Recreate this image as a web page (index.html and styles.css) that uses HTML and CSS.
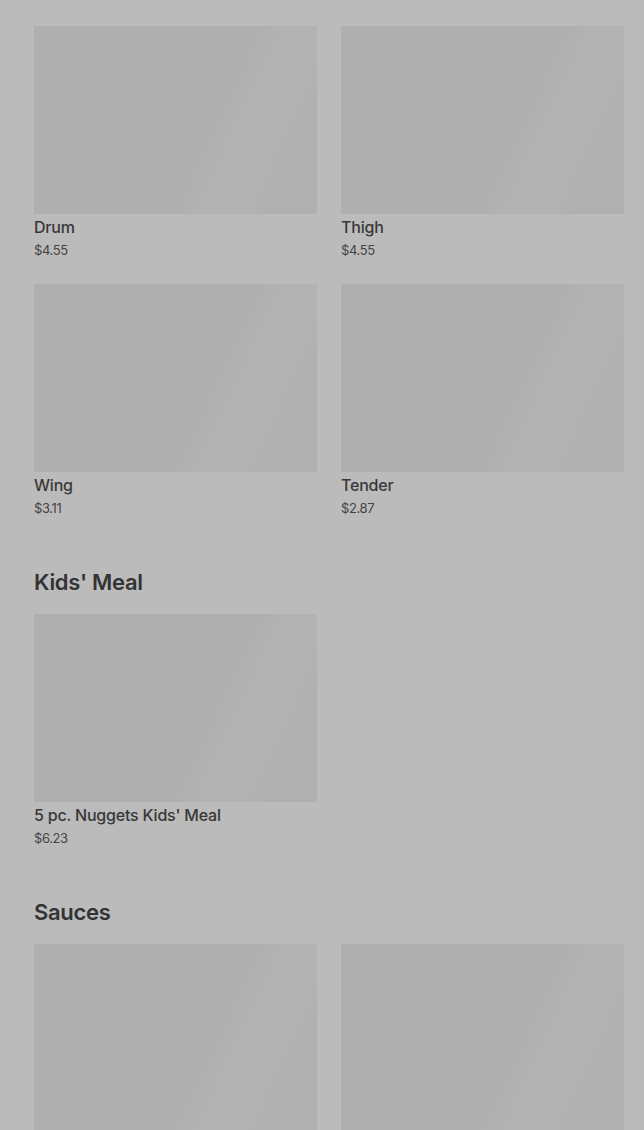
FILE: index.html
```html
<!DOCTYPE html>
<html lang="en">
<head>
<meta charset="utf-8">
<title>Menu</title>
<link rel="stylesheet" href="styles.css">
</head>
<body>
<main class="menu">
  <section class="section">
    <div class="grid">
      <div class="item"><div class="thumb"></div><div class="name">Drum</div><div class="price">$4.55</div></div>
      <div class="item"><div class="thumb"></div><div class="name">Thigh</div><div class="price">$4.55</div></div>
      <div class="item"><div class="thumb"></div><div class="name">Wing</div><div class="price">$3.11</div></div>
      <div class="item"><div class="thumb"></div><div class="name">Tender</div><div class="price">$2.87</div></div>
    </div>
  </section>
  <section class="section">
    <h2 class="heading">Kids' Meal</h2>
    <div class="grid">
      <div class="item"><div class="thumb"></div><div class="name">5 pc. Nuggets Kids' Meal</div><div class="price">$6.23</div></div>
    </div>
  </section>
  <section class="section">
    <h2 class="heading">Sauces</h2>
    <div class="grid">
      <div class="item"><div class="thumb"></div><div class="name"></div><div class="price"></div></div>
      <div class="item"><div class="thumb"></div><div class="name"></div><div class="price"></div></div>
    </div>
  </section>
</main>
</body>
</html>
```
FILE: styles.css
```css
html, body {
  margin: 0;
  padding: 0;
  background: #bbbbbb;
  overflow: hidden;
}
body {
  font-family: Inter, "Noto Sans", "Liberation Sans", sans-serif;
  color: #353535;
}
.menu {
  padding: 26px 20px 0 34px;
  display: flex;
  flex-direction: column;
  gap: 50px;
}
.heading {
  margin: 0 0 18px;
  font-size: 22px;
  line-height: 28px;
  font-weight: 600;
  letter-spacing: -0.3px;
  color: #333333;
}
.grid {
  display: grid;
  grid-template-columns: 283px 283px;
  column-gap: 24px;
  row-gap: 24px;
}
.thumb {
  height: 188px;
  background: linear-gradient(115deg, #afafaf 0%, #afafaf 60%, #b3b3b3 70%, #b3b3b3 78%, #b0b0b0 86%, #b0b0b0 100%);
}
.name {
  margin-top: 3px;
  font-size: 16px;
  line-height: 20px;
  font-weight: 500;
  letter-spacing: -0.2px;
  color: #383838;
  height: 20px;
}
.price {
  margin-top: 3px;
  font-size: 13px;
  line-height: 20px;
  font-weight: 400;
  letter-spacing: -0.4px;
  color: #444444;
  height: 20px;
}
```
